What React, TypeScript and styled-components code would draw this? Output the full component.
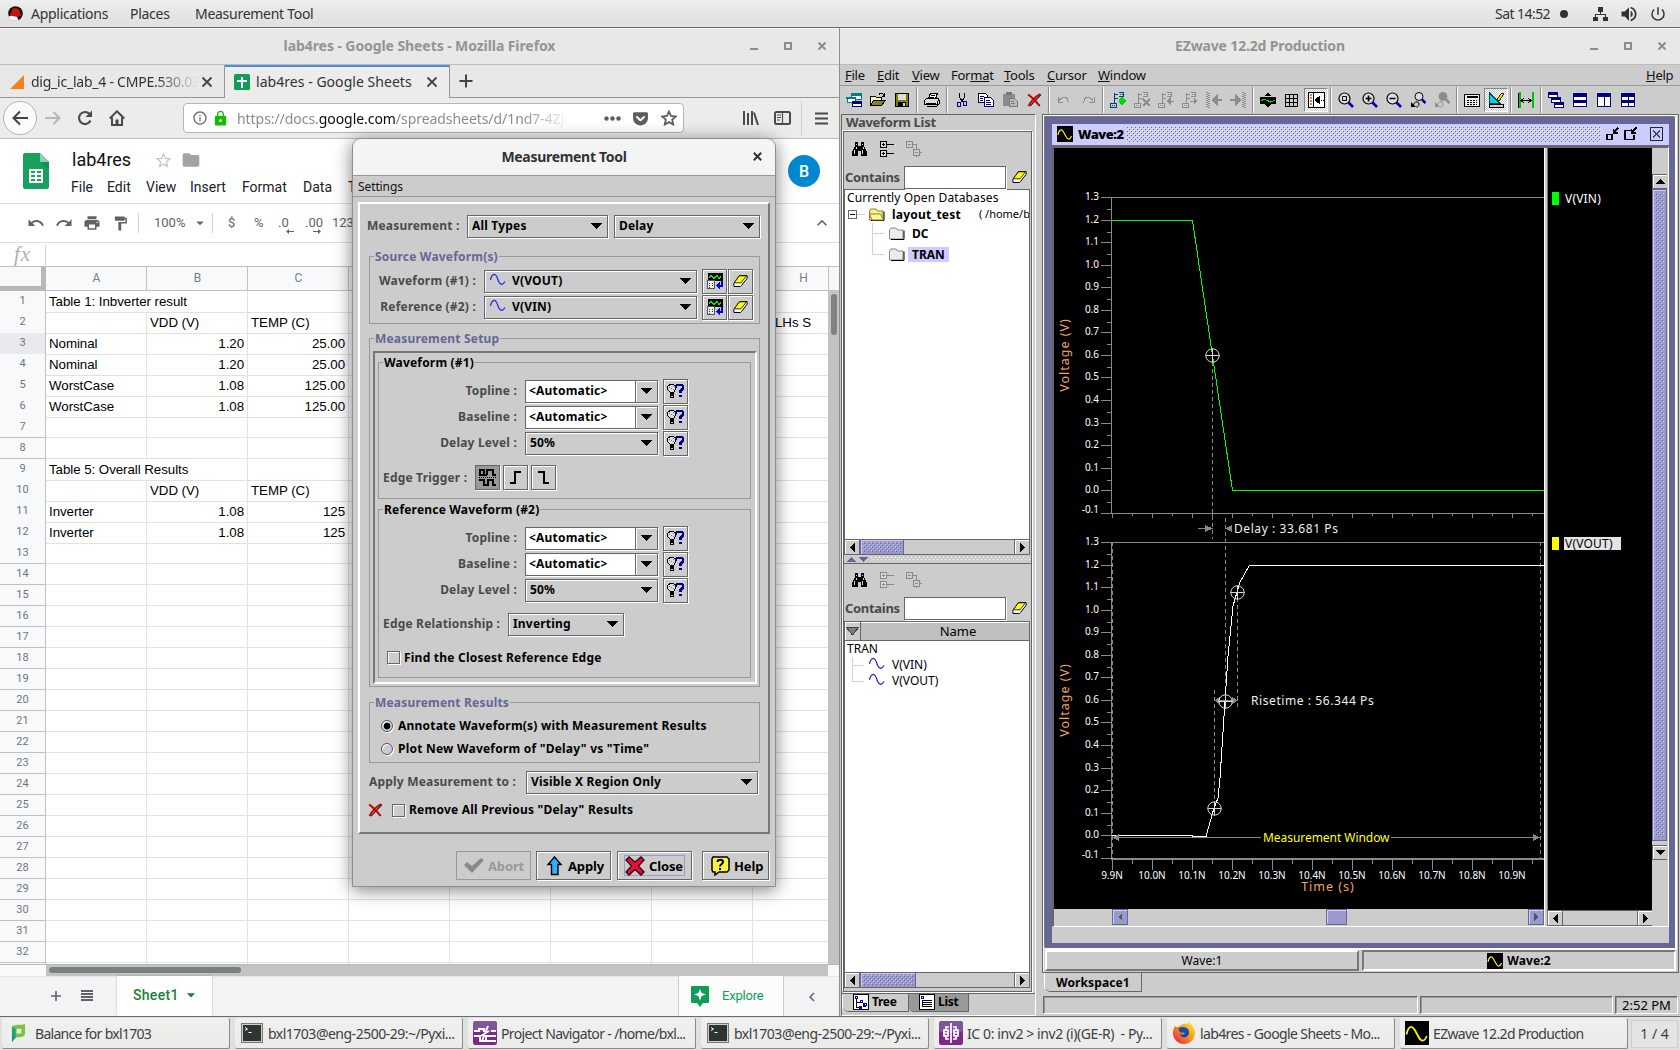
import React from "react";
import styled, { createGlobalStyle, css } from "styled-components";
import {
  MdUndo, MdRedo, MdPrint, MdFormatPaint, MdFolder, MdStarBorder, MdVolumeUp,
  MdPowerSettingsNew, MdLock, MdKeyboardArrowUp, MdKeyboardArrowLeft, MdArrowDropDown,
  MdInfoOutline,
} from "react-icons/md";
import { FaGetPocket } from "react-icons/fa";

const UI = `"Noto Sans", "Open Sans", sans-serif`;
const ROBOTO = `Roboto, "Noto Sans", sans-serif`;
const SHEET = `"Liberation Sans", Arial, sans-serif`;

const Global = createGlobalStyle`
  *, *::before, *::after { box-sizing: border-box; }
  html, body { margin: 0; padding: 0; background: #2f6f8f; overflow: hidden; }
  body { font-family: ${UI}; white-space: nowrap; cursor: default; }
  svg { display: block; flex: none; }
`;

/* ---------- shared looks ---------- */

const javaBold = css`
  font: 700 12px/16px ${UI};
  letter-spacing: 0.19px;
`;
const javaPlain = css`
  font: 400 12px/16px ${UI};
  letter-spacing: 0;
`;
const metalEdge = css`
  border: 1px solid #666;
  box-shadow: inset 1px 1px 0 #fff, 1px 1px 0 #fff;
`;
const bumps = (light: string, dark: string) => css`
  background-image:
    conic-gradient(from 270deg at 1px 1px, ${light} 90deg, transparent 0),
    conic-gradient(from 270deg at 1px 1px, ${dark} 90deg, transparent 0),
    conic-gradient(from 270deg at 1px 1px, ${light} 90deg, transparent 0),
    conic-gradient(from 270deg at 1px 1px, ${dark} 90deg, transparent 0);
  background-size: 4px 4px;
  background-position: 0 0, 1px 1px, 2px 2px, 3px 3px;
`;

/* ---------- desktop ---------- */

const Desktop = styled.div`
  position: relative;
  width: 1680px;
  height: 1050px;
  overflow: hidden;
  display: flex;
  flex-direction: column;
`;
const TopBar = styled.header`
  height: 28px;
  flex: none;
  display: flex;
  align-items: center;
  padding-left: 8px;
  background: linear-gradient(#ededed, #dfdfdf);
  border-bottom: 1px solid #6a6a6a;
  color: #2e3436;
  font-size: 14px;
  letter-spacing: -0.28px;
`;
const TopItem = styled.span<{ $w: number }>`
  width: ${(p) => p.$w}px;
  &:first-of-type { margin-left: 8px; }
`;
const TopRight = styled.div`
  margin-left: auto;
  display: flex;
  align-items: center;
  padding-right: 13px;
`;
const Clock = styled.span`
  width: 65px;
  letter-spacing: -0.55px;
`;
const Dot = styled.span`
  width: 8px;
  height: 8px;
  border-radius: 50%;
  background: #2e3436;
  margin-right: 24px;
`;
const TrayIcon = styled.span<{ $mr?: number }>`
  margin-right: ${(p) => p.$mr || 0}px;
`;
const Workarea = styled.main`
  display: flex;
  height: 988px;
  flex: none;
`;

/* ---------- window frame ---------- */

const Titlebar = styled.div`
  height: 37px;
  flex: none;
  display: flex;
  align-items: center;
  position: relative;
  background: #e8e8e7;
  border-top: 1px solid #f8f8f8;
  border-bottom: 1px solid #bdbdb8;
`;
const WindowTitle = styled.div<{ $ls?: number }>`
  flex: 1;
  text-align: center;
  padding-bottom: 2px;
  font: 700 14px/20px ${UI};
  letter-spacing: ${(p) => p.$ls ?? -0.08}px;
  color: #929595;
`;
const Controls = styled.div<{ $right: number }>`
  position: absolute;
  right: ${(p) => p.$right}px;
  top: 13px;
  display: flex;
  gap: 26px;
  color: #8b8e8f;
`;

const WinControls = ({ right = 13 }: { right?: number }) => (
  <Controls $right={right}>
    <svg width="8" height="8" viewBox="0 0 8 8"><path d="M0 7h8" stroke="currentColor" strokeWidth="2" /></svg>
    <svg width="8" height="8" viewBox="0 0 8 8"><path d="M1 1h6v6H1z" fill="none" stroke="currentColor" strokeWidth="2" /></svg>
    <svg width="8" height="8" viewBox="0 0 8 8"><path d="M.5.5l7 7M7.500.5l-7 7" stroke="currentColor" strokeWidth="2" /></svg>
  </Controls>
);

/* ---------- firefox ---------- */

const Firefox = styled.section`
  width: 840px;
  flex: none;
  display: flex;
  flex-direction: column;
  background: #ececeb;
  border-right: 1px solid #8f8f8f;
`;
const TabStrip = styled.div`
  height: 33px;
  flex: none;
  display: flex;
  background: #e8e8e7;
  box-shadow: inset 0 -1px 0 #979797;
`;
const Tab = styled.div<{ $active?: boolean }>`
  display: flex;
  align-items: center;
  width: ${(p) => (p.$active ? 226 : 224)}px;
  padding-left: ${(p) => (p.$active ? 9 : 10)}px;
  font-size: 14px;
  letter-spacing: ${(p) => (p.$active ? 0.04 : -0.24)}px;
  color: #2e3436;
  ${(p) =>
    p.$active &&
    css`
      background: #ececeb;
      border: 1px solid #979797;
      border-width: 0 1px;
      box-shadow: inset 0 2px 0 #4a90d9;
    `}
`;
const TabText = styled.span<{ $fade?: boolean }>`
  width: 169px;
  margin-left: ${(p) => (p.$fade ? 7 : 6)}px;
  overflow: hidden;
  ${(p) =>
    p.$fade &&
    css`
      mask-image: linear-gradient(90deg, #000 125px, transparent 167px);
    `}
`;
const CloseX = () => (
  <svg width="14" height="14" viewBox="0 0 14 14"><path d="M2.500 2.500l9 9M11.500 2.500l-9 9" stroke="#3f4446" strokeWidth="1.800" /></svg>
);
const PlusIcon = styled.svg`
  margin: 8px 0 0 8px;
`;
const NavBar = styled.div`
  height: 41px;
  flex: none;
  display: flex;
  align-items: center;
  padding-left: 3px;
  border-bottom: 1px solid #bcbcbc;
  color: #474b4d;
`;
const BackButton = styled.span`
  width: 34px;
  height: 34px;
  border-radius: 50%;
  border: 1px solid #b3b3b0;
  background: #fbfbfb;
  display: grid;
  place-items: center;
`;
const NavIcon = styled.span<{ $ml: number }>`
  margin-left: ${(p) => p.$ml}px;
`;
const UrlBar = styled.div`
  margin-left: 58px;
  width: 501px;
  height: 30px;
  border: 1px solid #b6b6b3;
  border-radius: 4px;
  background: #fff;
  display: flex;
  align-items: center;
  gap: 4px;
  padding-left: 8px;
  color: #555;
`;
const Url = styled.span`
  margin-left: 4px;
  width: 339px;
  overflow: hidden;
  font-size: 14px;
  letter-spacing: -0.06px;
  color: #8b8d8e;
  mask-image: linear-gradient(90deg, #000 285px, transparent 333px);
  b { font-weight: 400; color: #0c0c0d; }
`;
const NavDivider = styled.span`
  width: 1px;
  height: 34px;
  background: #cfcfcd;
  margin: 0 13px 0 10px;
`;

/* ---------- google sheets ---------- */

const DocHeader = styled.div`
  height: 65px;
  flex: none;
  display: flex;
  background: #fff;
  border-bottom: 1px solid #dcdedf;
  padding: 14px 0 0 23px;
`;
const DocInfo = styled.div`
  margin-left: 22px;
  width: 706px;
`;
const DocTitleRow = styled.div`
  display: flex;
  align-items: center;
  gap: 8px;
  height: 20px;
  margin-top: -3px;
  color: #a0a3a7;
`;
const DocTitle = styled.span`
  width: 75px;
  padding-left: 1px;
  font: 400 18px/22px ${ROBOTO};
  color: #111;
`;
const DocMenu = styled.nav`
  display: flex;
  margin-top: 7px;
  font: 400 14px/20px ${ROBOTO};
  color: #202124;
`;
const MenuWord = styled.span<{ $w: number }>`
  width: ${(p) => p.$w}px;
`;
const Avatar = styled.span`
  width: 32px;
  height: 32px;
  margin-top: 2px;
  margin-left: 11px;
  border-radius: 50%;
  background: #0288d1;
  color: #fff;
  font: 500 16px/33px ${ROBOTO};
  text-align: center;
`;
const SheetToolbar = styled.div`
  height: 39px;
  flex: none;
  display: flex;
  align-items: center;
  padding-left: 27px;
  background: #fff;
  border-bottom: 1px solid #dcdedf;
  color: #5f6368;
  font: 400 13px/18px ${ROBOTO};
`;
const ToolSlot = styled.span<{ $w: number }>`
  width: ${(p) => p.$w}px;
`;
const ThinRule = styled.span<{ $mr: number }>`
  width: 1px;
  height: 20px;
  background: #d0d2d4;
  margin-right: ${(p) => p.$mr}px;
`;
const Collapse = styled.span`
  margin-left: auto;
  margin-right: 7px;
`;
const Decimals = styled.span`
  position: relative;
  width: 27px;
  svg { position: absolute; left: 8px; top: 15px; }
`;
const FormulaBar = styled.div`
  height: 24px;
  flex: none;
  display: flex;
  align-items: center;
  background: #fff;
  border-bottom: 1px solid #c0c0c0;
  i {
    width: 45px;
    padding: 0 0 2px 14px;
    font: italic 21px/20px "Liberation Serif", serif;
    letter-spacing: 1px;
    color: #b0b0b0;
  }
`;
const GridArea = styled.div`
  display: flex;
  height: 697px;
  flex: none;
  background: #fff;
`;
const Grid = styled.div`
  width: 828px;
  overflow: hidden;
  display: flex;
  flex-direction: column;
`;
const GridRow = styled.div<{ $head?: boolean }>`
  display: grid;
  flex: none;
  grid-template-columns: 46px repeat(7, 101px) 101px;
  height: ${(p) => (p.$head ? 24 : 21)}px;
`;
const Corner = styled.div`
  background: #f8f9fa;
  border: solid #b9b9b9;
  border-width: 0 5px 5px 0;
`;
const ColHead = styled.div`
  background: #f8f9fa;
  border: solid #c0c0c0;
  border-width: 0 1px 1px 0;
  text-align: center;
  padding-left: 1px;
  font: 400 12px/22px ${ROBOTO};
  color: #777b80;
`;
const RowHead = styled.div<{ $on?: boolean }>`
  background: ${(p) => (p.$on ? "#e8eaed" : "#f8f9fa")};
  border: solid #c0c0c0;
  border-width: 0 1px 1px 0;
  text-align: center;
  font: 400 11px/20px ${ROBOTO};
  color: #70757a;
`;
const Cell = styled.div<{ $right?: boolean; $over?: boolean; $pl?: number }>`
  border: solid #e1e1e1;
  border-width: 0 1px 1px 0;
  border-right-color: ${(p) => (p.$over ? "transparent" : "#e1e1e1")};
  padding: 1px 3px 0 ${(p) => p.$pl || 3}px;
  font: 400 13.330px/20px ${SHEET};
  letter-spacing: -0.06px;
  color: #000;
  text-align: ${(p) => (p.$right ? "right" : "left")};
`;
const VScroll = styled.div`
  flex: 1;
  background: linear-gradient(#f6f7f8 23px, #c0c0c0 23px, #c0c0c0 24px, #c1c4c3 24px);
  padding: 27px 0 0 2px;
  border-left: 1px solid #c0c0c0;
  &::before {
    content: "";
    display: block;
    width: 6px;
    height: 41px;
    border-radius: 3px;
    background: #7d8282;
  }
`;
const HScroll = styled.div`
  height: 12px;
  flex: none;
  display: flex;
  background: #f8f9fa;
  border-top: 1px solid #b5b8b7;
`;
const HTrack = styled.div`
  margin-left: 46px;
  width: 782px;
  background: #c1c4c3;
  padding: 2px 3px;
  &::before {
    content: "";
    display: block;
    width: 192px;
    height: 6px;
    border-radius: 3px;
    background: #7a7f7f;
  }
`;
const SheetTabs = styled.div`
  height: 40px;
  flex: none;
  display: flex;
  align-items: center;
  background: #f1f3f4;
  border-top: 1px solid #e3e6e7;
  padding: 0 0 2px 51px;
`;
const ListGlyph = styled.svg`
  margin-left: 20px;
`;
const SheetTab = styled.div`
  width: 95px;
  height: 40px;
  margin: 1px 0 0 24px;
  display: flex;
  align-items: center;
  padding: 0 0 2px 16px;
  background: #fff;
  box-shadow: 0 0 2px rgba(0, 0, 0, 0.25);
  color: #188038;
  font: 500 14px/20px ${ROBOTO};
  letter-spacing: 0.3px;
  span { width: 48px; }
`;
const Explore = styled.div`
  width: 106px;
  height: 40px;
  margin: 1px 0 0 466px;
  display: flex;
  align-items: center;
  gap: 13px;
  padding: 0 0 0 12px;
  background: #fcfcfc;
  border: solid #c9cbcd;
  border-width: 0 1px;
  color: #0f9d58;
  font: 400 13px/20px ${ROBOTO};
  letter-spacing: -0.2px;
`;
const FoldArrow = styled.span`
  margin: 3px 0 0 19px;
  color: #5f6368;
`;

type Val = string | undefined;
const ROWS: Record<number, Val[]> = {
  1: ["Table 1: Inbverter result"],
  2: ["", "VDD (V)", "TEMP (C)", "", "", "", "", "LHs S"],
  3: ["Nominal", "1.20", "25.00"],
  4: ["Nominal", "1.20", "25.00"],
  5: ["WorstCase", "1.08", "125.00"],
  6: ["WorstCase", "1.08", "125.00"],
  9: ["Table 5: Overall Results"],
  10: ["", "VDD (V)", "TEMP (C)"],
  11: ["Inverter", "1.08", "125"],
  12: ["Inverter", "1.08", "125"],
};
const COLS = ["A", "B", "C", "D", "E", "F", "G", "H"];

const FirefoxWindow = () => (
  <Firefox>
    <Titlebar><WindowTitle>lab4res - Google Sheets - Mozilla Firefox</WindowTitle><WinControls /></Titlebar>
    <TabStrip>
      <Tab>
        <svg width="14" height="14" viewBox="0 0 14 14"><path d="M14 0v14H0z" fill="#f5821f" /></svg>
        <TabText $fade>dig_ic_lab_4 - CMPE.530.03</TabText>
        <CloseX />
      </Tab>
      <Tab $active>
        <svg width="16" height="16" viewBox="0 0 16 16"><rect width="16" height="16" rx="1.500" fill="#0f9d58" /><path d="M7 3h2v3h4v2H9v6H7V8H3V6h4z" fill="#fff" /></svg>
        <TabText>lab4res - Google Sheets</TabText>
        <CloseX />
      </Tab>
      <PlusIcon width="16" height="16" viewBox="0 0 16 16"><path d="M8 1.500v13M1.500 8h13" stroke="#3f4446" strokeWidth="2" /></PlusIcon>
    </TabStrip>
    <NavBar>
      <BackButton>
        <svg width="18" height="16" viewBox="0 0 18 16"><path d="M17 8H3M9 1.500L2.500 8 9 14.500" fill="none" stroke="#3f4446" strokeWidth="2" /></svg>
      </BackButton>
      <NavIcon $ml={8}><svg width="16" height="14" viewBox="0 0 16 14"><path d="M0 7h14M8.500 1l6 6-6 6" fill="none" stroke="#b7b8b8" strokeWidth="2" /></svg></NavIcon>
      <NavIcon $ml={16}><svg width="16" height="16" viewBox="0 0 16 16"><path d="M13.500 10.500A6 6 0 1 1 12.500 4" fill="none" stroke="#474b4d" strokeWidth="2.200" /><path d="M15 .5V7H8.500z" fill="#474b4d" /></svg></NavIcon>
      <NavIcon $ml={16}><svg width="16" height="16" viewBox="0 0 16 16"><path d="M.8 8.500L8 1.300l7.200 7.200M3 7.500V15h10V7.500" fill="none" stroke="#474b4d" strokeWidth="2" /><path d="M6.500 9.500h3V15h-3z" fill="#474b4d" /></svg></NavIcon>
      <UrlBar>
        <MdInfoOutline size={16} color="#6a6d6f" />
        <MdLock size={17} color="#12bc00" />
        <Url>https://docs.<b>google.com</b>/spreadsheets/d/1nd7-4ZJn</Url>
        <NavIcon $ml={24}><svg width="17" height="5" viewBox="0 0 17 5"><circle cx="2.500" cy="2.500" r="2.200" fill="#5a5e60" /><circle cx="8.500" cy="2.500" r="2.200" fill="#5a5e60" /><circle cx="14.500" cy="2.500" r="2.200" fill="#5a5e60" /></svg></NavIcon>
        <NavIcon $ml={7}><FaGetPocket size={17} color="#5a5e60" /></NavIcon>
        <NavIcon $ml={8}><svg width="16" height="16" viewBox="0 0 16 16"><path d="M8 1.500l2 4.500 4.800.5-3.600 3.200 1 4.800L8 12.100l-4.200 2.400 1-4.800L1.200 6.500 6 6z" fill="none" stroke="#5a5e60" strokeWidth="1.800" /></svg></NavIcon>
      </UrlBar>
      <NavIcon $ml={59}><svg width="16" height="14" viewBox="0 0 16 14"><path d="M1 0v14M5 2v12M9 0v14M11 1.500L15 14" stroke="#474b4d" strokeWidth="2" /></svg></NavIcon>
      <NavIcon $ml={15}><svg width="17" height="14" viewBox="0 0 17 14"><rect x="1" y="1" width="15" height="12" rx="1.500" fill="none" stroke="#474b4d" strokeWidth="2" /><path d="M8.500 1v12M3 4h4M3 6.500h4M3 9h3" stroke="#474b4d" strokeWidth="1.200" /></svg></NavIcon>
      <NavDivider />
      <svg width="13" height="13" viewBox="0 0 13 13"><path d="M0 1.500h13M0 6.500h13M0 11.500h13" stroke="#474b4d" strokeWidth="2" /></svg>
    </NavBar>
    <DocHeader>
      <svg width="26" height="36" viewBox="0 0 26 36">
        <path d="M2 0h15l9 9v25a2 2 0 0 1-2 2H2a2 2 0 0 1-2-2V2a2 2 0 0 1 2-2z" fill="#18a05e" />
        <path d="M17 0l9 9h-9z" fill="#8ed1b1" /><path d="M17 9l9 8V9z" fill="#128047" opacity=".5" />
        <path d="M6 16h14v14H6zM8 18v2h4v-2zm6 0v2h4v-2zM8 22v2h4v-2zm6 0v2h4v-2zM8 26v2h4v-2zm6 0v2h4v-2z" fill="#fff" fillRule="evenodd" />
      </svg>
      <DocInfo>
        <DocTitleRow>
          <DocTitle>lab4res</DocTitle>
          <MdStarBorder size={19} color="#c4c7ca" />
          <MdFolder size={20} />
        </DocTitleRow>
        <DocMenu>
          {([["File", 36], ["Edit", 39], ["View", 44], ["Insert", 52], ["Format", 61], ["Data", 45], ["Tools", 40]] as [string, number][]).map(([t, w]) => (
            <MenuWord key={t} $w={w}>{t}</MenuWord>
          ))}
        </DocMenu>
      </DocInfo>
      <Avatar>B</Avatar>
    </DocHeader>
    <SheetToolbar>
      <ToolSlot $w={28}><MdUndo size={18} /></ToolSlot>
      <ToolSlot $w={28}><MdRedo size={18} /></ToolSlot>
      <ToolSlot $w={29}><MdPrint size={18} /></ToolSlot>
      <ToolSlot $w={26}><MdFormatPaint size={17} /></ToolSlot>
      <ThinRule $mr={15} />
      <ToolSlot $w={37}>100%</ToolSlot>
      <ToolSlot $w={21}><MdArrowDropDown size={18} /></ToolSlot>
      <ThinRule $mr={15} />
      <ToolSlot $w={26}>$</ToolSlot>
      <ToolSlot $w={24}>%</ToolSlot>
      <Decimals>.0<svg width="8" height="5" viewBox="0 0 8 5"><path d="M3 0v5L0 2.500zM3 2h5v1H3z" fill="#5f6368" /></svg></Decimals>
      <Decimals>.00<svg width="8" height="5" viewBox="0 0 8 5"><path d="M5 0v5l3-2.500zM0 2h5v1H0z" fill="#5f6368" /></svg></Decimals>
      <span>123</span>
      <Collapse><MdKeyboardArrowUp size={20} /></Collapse>
    </SheetToolbar>
    <FormulaBar><i>fx</i><ThinRule $mr={0} /></FormulaBar>
    <GridArea>
      <Grid>
        <GridRow $head>
          <Corner />
          {COLS.map((c) => <ColHead key={c}>{c}</ColHead>)}
        </GridRow>
        {Array.from({ length: 33 }, (_, i) => i + 1).map((n) => (
          <GridRow key={n}>
            <RowHead $on={n === 3}>{n < 33 ? n : ""}</RowHead>
            {COLS.map((c, i) => {
              const v = ROWS[n]?.[i];
              return (
                <Cell key={c} $right={!!v && /^[\d.]+$/.test(v)} $over={!!v && v.startsWith("Table")} $pl={i === 7 ? 22 : 3}>{v}</Cell>
              );
            })}
          </GridRow>
        ))}
      </Grid>
      <VScroll />
    </GridArea>
    <HScroll><HTrack /></HScroll>
    <SheetTabs>
      <svg width="10" height="10" viewBox="0 0 10 10"><path d="M5 0v10M0 5h10" stroke="#5f6368" strokeWidth="1.600" /></svg>
      <ListGlyph width="12" height="11" viewBox="0 0 12 11"><path d="M0 1h12M0 4h12M0 7h12M0 10h12" stroke="#5f6368" strokeWidth="1.800" /></ListGlyph>
      <SheetTab><span>Sheet1</span><MdArrowDropDown size={20} /></SheetTab>
      <Explore>
        <svg width="18" height="21" viewBox="0 0 18 21"><path d="M1 0h16a1 1 0 0 1 1 1v15a1 1 0 0 1-1 1h-5l-3 4-3-4H1a1 1 0 0 1-1-1V1a1 1 0 0 1 1-1z" fill="#0f9d58" /><path d="M9 3l1.600 4L15 8.600 10.600 10 9 14.500 7.400 10 3 8.600 7.400 7z" fill="#fff" /></svg>
        Explore
      </Explore>
      <FoldArrow><MdKeyboardArrowLeft size={18} /></FoldArrow>
    </SheetTabs>
  </Firefox>
);

/* ---------- small pixel icons ---------- */

const Px = ({ w = 16, h = 16, children }: { w?: number; h?: number; children: React.ReactNode }) => (
  <svg width={w} height={h} viewBox={`0 0 ${w} ${h}`} shapeRendering="crispEdges" fill="none">{children}</svg>
);
const SineIcon = ({ box, size = 16 }: { box?: boolean; size?: number }) => (
  <svg width={size} height={size} viewBox="0 0 16 16" fill="none">
    {box && <rect width="16" height="16" fill="#000" />}
    <path d={box ? "M1 9C2 3.500 4.500 2.500 6.500 6L9 10.500c1.800 3.500 4 3.500 5.500-.5" : "M.5 7C1.500 1 5.500-1 7.500 5.500s5 7.500 7.500 3"} stroke={box ? "#f5ee1c" : "#2424f0"} strokeWidth="1.200" />
  </svg>
);
const EraserIcon = () => (
  <svg width="15" height="12" viewBox="0 0 15 12"><path d="M6.500.5h7.500l.3 2.500-5.800 7.500-1 1H1l-.2-3z" fill="#fff" stroke="#000" /><path d="M6.500.8h7L8 7.800H1.200z" fill="#ffff00" stroke="#000" strokeWidth=".8" /></svg>
);
const CalcWaveIcon = () => (
  <Px>
    <path d="M1 0h15v8H1z" fill="#000" /><path d="M2 5l2-3 3 4 3-4 2 4 2-3" stroke="#00f000" strokeWidth="1.200" />
    <path d="M0 7h8v9H0z" fill="#555" /><path d="M1 8h6v7H1z" fill="#eee" /><path d="M2 10h1v1H2zM5 10h1v1H5zM2 12h1v1H2zM5 12h1v1H5zM2 14h1v1H2z" fill="#333" />
    <path d="M14 8h2v6h-3v2l-4-3.500L13 9v3h1z" fill="#0000e0" />
  </Px>
);
const BulbIcon = () => (
  <svg width="17" height="15" viewBox="0 0 17 15" shapeRendering="crispEdges">
    <path d="M3 .5h3.500l2 2v3l-2 3h-3l-3-3v-3z" fill="#ddd" stroke="#000" /><path d="M3.500 9h3v1.500h-3zM3.500 11.500h3V13h-3z" fill="#ccc" stroke="#000" />
    <path d="M4 4h1v1H4zM6 2h1v1H6zM6 5h1v1H6zM2 3h1v1H2z" fill="#777" />
    <path d="M9 4V2l2-1.500h3.500L16 2v2.500L13.500 7v2" fill="none" stroke="#000080" strokeWidth="2.200" /><path d="M12.300 10.500h2.400v2.300h-2.400z" fill="#000080" />
  </svg>
);
const RedX = () => (
  <svg width="15" height="14" viewBox="0 0 15 14"><path d="M2 2l11 11M14 1.500L3 13" stroke="#222" strokeWidth="1.200" /><path d="M1 1.500C5 4 9 8 12 12.500M13 1C8 4 4 8 1.500 13" fill="none" stroke="#d40000" strokeWidth="2" /></svg>
);
const BinocularIcon = () => (
  <Px w={15} h={14}><path d="M3 0h3v4h3V0h3v4l1 2 2 4v4H9V9H6v5H0v-4l2-4 1-2z" fill="#000" /><path d="M4 2h1v1H4zM10 2h1v1h-1zM2 8h1v4H2zM10 8h1v4h-1zM4 5h1v2H4zM11 5h1v2h-1z" fill="#ddd" /></Px>
);
const ExpandIcon = ({ c = "#000" }: { c?: string }) => (
  <Px w={15} h={16}><path d="M1 .5h6v6H1zM1 9.500h6v6H1z" fill="#ddd" stroke={c} /><path d="M2.500 3.500h3M4 2v3M2.500 12.500h3M4 11v3M7 3.500h8M7 12.500h8" stroke={c} /></Px>
);
const CollapseIcon = () => (
  <Px w={16} h={16}><path d="M.5.5h6v6h-6zM7.500 8.500h6v6h-6zM2 3.500h3M9 11.500h3M7 3.500h3.500v5M14 11.500h2M10.500 15v1" stroke="#888" /></Px>
);
const FolderIcon = ({ open }: { open?: boolean }) => (
  <svg width="16" height="13" viewBox="0 0 16 13">
    <path d="M.5 12V3L2 1h5l1.500 2H14v9z" fill={open ? "#f6ec8a" : "#ececec"} stroke={open ? "#8f8420" : "#888"} />
    <path d="M15 3.500v9H2" stroke="#000" fill="none" />
    {open && <path d="M.5 6h11l3 6H3z" fill="#fff59c" stroke="#8f8420" />}
  </svg>
);

/* ---------- measurement dialog ---------- */

const Dialog = styled.section`
  position: absolute;
  left: 352px;
  top: 138px;
  width: 424px;
  height: 749px;
  border: 1px solid #8e8e8e;
  border-radius: 9px 9px 0 0;
  background: #ccc;
  box-shadow: 0 3px 18px rgba(0, 0, 0, 0.5);
  display: flex;
  flex-direction: column;
`;
const DialogTitle = styled.div`
  position: relative;
  height: 37px;
  flex: none;
  border-radius: 8px 8px 0 0;
  background: #f4f4f4;
  border-bottom: 1px solid #999;
  text-align: center;
  font: 700 14px/35px ${UI};
  letter-spacing: -0.3px;
  color: #2e3436;
  svg { position: absolute; right: 13px; top: 13px; }
`;
const DialogMenu = styled.div`
  height: 21px;
  flex: none;
  padding: 3px 0 0 5px;
  border-bottom: 1px solid #999;
  ${javaPlain}
  letter-spacing: -0.1px;
  color: #111;
`;
const RaisedPanel = styled.div`
  margin: 5px 0 0 5px;
  width: 412px;
  height: 632px;
  border: 2px solid #fff;
  border-right-color: #777;
  border-bottom-color: #777;
`;
const FormRow = styled.div<{ $mt: number; $ml: number; $h?: number }>`
  display: flex;
  align-items: center;
  height: ${(p) => p.$h || 24}px;
  margin: ${(p) => p.$mt}px 0 0 ${(p) => p.$ml}px;
`;
const Label = styled.label<{ $w: number; $right?: boolean }>`
  width: ${(p) => p.$w}px;
  text-align: ${(p) => (p.$right ? "right" : "left")};
  ${javaBold}
  color: #4a4a4a;
`;
const ComboBox = styled.div<{ $w: number; $ml?: number }>`
  width: ${(p) => p.$w}px;
  height: 23px;
  margin-left: ${(p) => p.$ml || 0}px;
  ${metalEdge}
  display: flex;
  align-items: center;
  padding: 0 5px 1px 4px;
  gap: 6px;
  ${javaBold}
  color: #000;
  > svg:last-child { margin-left: auto; }
  > svg:first-child:not(:last-child) { margin-left: 1px; }
`;
const EditCombo = styled(ComboBox)`
  background: #fff;
  box-shadow: 1px 1px 0 #fff;
  padding: 0 0 0 3px;
`;
const ArrowBox = styled.span`
  width: 22px;
  height: 21px;
  margin-left: auto;
  background: #ccc;
  border-left: 1px solid #666;
  box-shadow: inset 1px 1px 0 #fff;
  display: grid;
  place-items: center;
`;
const IconButton = styled.button<{ $ml?: number; $on?: boolean }>`
  width: 25px;
  height: 25px;
  padding: 0;
  margin-left: ${(p) => p.$ml || 0}px;
  background: ${(p) => (p.$on ? "#999" : "#ccc")};
  ${metalEdge}
  ${(p) => p.$on && css`box-shadow: 1px 1px 0 #fff;`}
  display: grid;
  place-items: center;
`;
const Group = styled.div<{ $w: number; $h: number; $mt: number; $ml: number }>`
  width: ${(p) => p.$w}px;
  height: ${(p) => p.$h}px;
  margin: ${(p) => p.$mt}px 0 0 ${(p) => p.$ml}px;
  border: 1px solid #999;
  display: flex;
  flex-direction: column;
  align-items: flex-start;
`;
const Legend = styled.span<{ $dark?: boolean }>`
  margin: -9px 0 0 4px;
  padding: 0 1px;
  height: 16px;
  background: #ccc;
  ${javaBold}
  line-height: 18px;
  color: ${(p) => (p.$dark ? "#000" : "#666699")};
`;
const SunkenPanel = styled.div`
  margin: 5px 0 0 3px;
  width: 384px;
  height: 333px;
  border: 2px solid #777;
  border-right-color: #fff;
  border-bottom-color: #fff;
  display: flex;
  flex-direction: column;
`;
const Check = styled.span`
  width: 13px;
  height: 13px;
  flex: none;
  ${metalEdge}
`;
const Radio = styled.span<{ $on?: boolean }>`
  width: 12px;
  height: 12px;
  flex: none;
  border-radius: 50%;
  border: 1px solid #555;
  box-shadow: 1px 1px 0 #fff, inset 1px 1px 0 #fff;
  background: ${(p) => (p.$on ? "radial-gradient(#000 3px, #ccc 3.700px)" : "#ccc")};
`;
const Caption = styled.span<{ $ml?: number }>`
  margin-left: ${(p) => p.$ml || 4}px;
  ${javaBold}
  letter-spacing: 0.22px;
  color: #000;
`;
const ClearMark = styled.span`
  margin-right: 9px;
`;
const ButtonRow = styled.div`
  display: flex;
  margin: 17px 0 0 103px;
`;
const DialogButton = styled.button<{ $w: number; $ml?: number; $off?: boolean; $focus?: boolean }>`
  width: ${(p) => p.$w}px;
  height: 29px;
  padding: 0 0 0 7px;
  margin-left: ${(p) => p.$ml || 0}px;
  background: #ccc;
  ${metalEdge}
  ${(p) => p.$off && css`border-color: #999; box-shadow: none;`}
  ${(p) => p.$focus && css`background: linear-gradient(#9999cc, #9999cc) 6px 3px / 61px 1px no-repeat, linear-gradient(#9999cc, #9999cc) 6px 23px / 61px 1px no-repeat, linear-gradient(#9999cc, #9999cc) 6px 3px / 1px 21px no-repeat, linear-gradient(#9999cc, #9999cc) 66px 3px / 1px 21px no-repeat, #ccc;`}
  display: flex;
  align-items: center;
  gap: 4px;
  ${javaBold}
  font-size: 13px;
  letter-spacing: -0.15px;
  color: ${(p) => (p.$off ? "#999" : "#000")};
`;

const Arrow = () => <Px w={11} h={6}><path d="M0 0h11v1H0zM1 1h9v1H1zM2 2h7v1H2zM3 3h5v1H3zM4 4h3v1H4zM5 5h1v1H5z" fill="#000" /></Px>;

const LevelRows = () => (
  <>
    {["Topline :", "Baseline :"].map((t, i) => (
      <FormRow key={t} $mt={i ? 0 : 8} $ml={0} $h={26}>
        <Label $w={138} $right>{t}</Label>
        <EditCombo $w={133} $ml={8}>&lt;Automatic&gt;<ArrowBox><Arrow /></ArrowBox></EditCombo>
        <IconButton $ml={5}><BulbIcon /></IconButton>
      </FormRow>
    ))}
    <FormRow $mt={0} $ml={0} $h={26}>
      <Label $w={138} $right>Delay Level :</Label>
      <ComboBox $w={133} $ml={8}>50%<Arrow /></ComboBox>
      <IconButton $ml={5}><BulbIcon /></IconButton>
    </FormRow>
  </>
);

const MeasurementTool = () => (
  <Dialog>
    <DialogTitle>Measurement Tool
      <svg width="9" height="9" viewBox="0 0 9 9"><path d="M.8.8l7.400 7.400M8.200.8L.8 8.200" stroke="#2e3436" strokeWidth="2" /></svg>
    </DialogTitle>
    <DialogMenu>Settings</DialogMenu>
    <RaisedPanel>
      <FormRow $mt={10} $ml={7}>
        <Label $w={100}>Measurement :</Label>
        <ComboBox $w={141}>All Types<Arrow /></ComboBox>
        <ComboBox $w={146} $ml={6}>Delay<Arrow /></ComboBox>
      </FormRow>
      <Group $w={391} $h={68} $mt={18} $ml={9}>
        <Legend>Source Waveform(s)</Legend>
        {[["Waveform (#1) :", "V(VOUT)"], ["Reference (#2) :", "V(VIN)"]].map(([l, v], i) => (
          <FormRow key={l} $mt={i ? 0 : 4} $ml={0} $h={26}>
            <Label $w={106} $right>{l}</Label>
            <ComboBox $w={213} $ml={8}><SineIcon />{v}<Arrow /></ComboBox>
            <IconButton $ml={5}><CalcWaveIcon /></IconButton>
            <IconButton $ml={1}><EraserIcon /></IconButton>
          </FormRow>
        ))}
      </Group>
      <Group $w={391} $h={349} $mt={14} $ml={9}>
        <Legend>Measurement Setup</Legend>
        <SunkenPanel>
          <Group $w={373} $h={137} $mt={9} $ml={3}>
            <Legend $dark>Waveform (#1)</Legend>
            <LevelRows />
            <FormRow $mt={9} $ml={4} $h={25}>
              <Label $w={92}>Edge Trigger :</Label>
              <IconButton $on><Px w={17} h={17}><path d="M0 1h5v5h3M8 6V1h6v5h3M1 1v5M0 6h5M0 11h5v5h4v-5h5v5h3" stroke="#000" strokeWidth="2" /><path d="M0 8.500h17" stroke="#000" strokeDasharray="1 1" /></Px></IconButton>
              <IconButton $ml={3}><Px w={13} h={15}><path d="M1 13h5V2h6" stroke="#000" strokeWidth="2" /></Px></IconButton>
              <IconButton $ml={3}><Px w={13} h={15}><path d="M1 2h6v11h5" stroke="#000" strokeWidth="2" /></Px></IconButton>
            </FormRow>
          </Group>
          <Group $w={373} $h={169} $mt={10} $ml={3}>
            <Legend $dark>Reference Waveform (#2)</Legend>
            <LevelRows />
            <FormRow $mt={9} $ml={4}>
              <Label $w={125}>Edge Relationship :</Label>
              <ComboBox $w={116}>Inverting<Arrow /></ComboBox>
            </FormRow>
            <FormRow $mt={15} $ml={8} $h={13}><Check /><Caption>Find the Closest Reference Edge</Caption></FormRow>
          </Group>
        </SunkenPanel>
      </Group>
      <Group $w={391} $h={61} $mt={15} $ml={9}>
        <Legend>Measurement Results</Legend>
        <FormRow $mt={7} $ml={11} $h={17}><Radio $on /><Caption $ml={5}>Annotate Waveform(s) with Measurement Results</Caption></FormRow>
        <FormRow $mt={6} $ml={11} $h={17}><Radio /><Caption $ml={5}>Plot New Waveform of "Delay" vs "Time"</Caption></FormRow>
      </Group>
      <FormRow $mt={7} $ml={9}>
        <Label $w={157}>Apply Measurement to :</Label>
        <ComboBox $w={232}>Visible X Region Only<Arrow /></ComboBox>
      </FormRow>
      <FormRow $mt={8} $ml={8} $h={16}>
        <ClearMark><RedX /></ClearMark>
        <Check />
        <Caption>Remove All Previous "Delay" Results</Caption>
      </FormRow>
    </RaisedPanel>
    <ButtonRow>
      <DialogButton $w={75} $off>
        <svg width="20" height="17" viewBox="0 0 20 17"><path d="M0 8l3-3 5 4 9-8 3 2L8 16z" fill="#8a8a8a" /></svg>Abort
      </DialogButton>
      <DialogButton $w={75} $ml={5}>
        <svg width="20" height="20" viewBox="0 0 20 20"><path d="M10.500 1L17 8.500h-3V18.500H7.500V8.500H4z" fill="#2fb0ff" stroke="#000" strokeWidth="1.400" /></svg>Apply
      </DialogButton>
      <DialogButton $w={75} $ml={6} $focus>
        <svg width="20" height="20" viewBox="0 0 20 20"><path d="M1 4l3-3 6 5 6-5 3 3-5.500 6L19 16l-3 3-6-5.500L4 19l-3-3 5.500-6z" fill="#e0103c" stroke="#300" strokeWidth="1.300" /></svg>Close
      </DialogButton>
      <DialogButton $w={67} $ml={10}>
        <svg width="20" height="20" viewBox="0 0 20 20"><path d="M3 1h14l2 2v11l-2 2H9l-4 3v-3H3l-1-2V3z" fill="#ffef4a" stroke="#000" strokeWidth="1.500" /><path d="M7.500 6c0-3 5.500-3 5.500 0 0 2-3 2-3 4.500M10 12v2" fill="none" stroke="#000" strokeWidth="2" /></svg>Help
      </DialogButton>
    </ButtonRow>
  </Dialog>
);

/* ---------- EZwave ---------- */

const EZ = styled.section`
  width: 840px;
  display: flex;
  flex-direction: column;
  background: #ccc;
`;
const EZMenu = styled.nav`
  height: 21px;
  flex: none;
  display: flex;
  align-items: center;
  padding: 0 7px 0 5px;
  border-bottom: 1px solid #999;
  font: 400 13px/18px ${UI};
  letter-spacing: -0.25px;
  color: #111;
  span:last-child { margin-left: auto; }
`;
const EZToolbar = styled.div`
  height: 28px;
  flex: none;
  display: flex;
  align-items: center;
  padding: 0 0 0 2px;
`;
const Tool = styled.span<{ $on?: boolean }>`
  width: 24px;
  height: 24px;
  display: grid;
  place-items: center;
  ${(p) =>
    p.$on &&
    css`
      border: 1px solid #888;
      border-right-color: #fff;
      border-bottom-color: #fff;
      background: repeating-conic-gradient(#fff 0 25%, #ccc 0 50%) 0 0 / 2px 2px;
    `}
`;
const ToolSep = styled.span`
  width: 2px;
  height: 26px;
  margin: 0 2px;
  background: linear-gradient(90deg, #888 1px, #fff 1px);
`;
const EZBody = styled.div`
  display: flex;
  height: 902px;
  flex: none;
`;
const Dock = styled.aside`
  width: 195px;
  height: 902px;
  margin-left: 1px;
  border: 1px solid #666;
  border-right-color: #fff;
  border-bottom-color: #fff;
  display: flex;
  flex-direction: column;
`;
const DockTitle = styled.div`
  height: 16px;
  padding-left: 4px;
  font: 700 13px/15px ${UI};
  letter-spacing: -0.3px;
  color: #4a4a4a;
`;
const DockFrame = styled.div`
  margin-left: 1px;
  width: 189px;
  height: 861px;
  border: 1px solid #666;
  box-shadow: 1px 1px 0 #fff, -1px -1px 0 #fff;
`;
const DockTools = styled.div<{ $h: number }>`
  height: ${(p) => p.$h}px;
  display: flex;
  align-items: center;
  padding: 0 0 0 8px;
  gap: 12px;
`;
const FilterRow = styled.div`
  height: 24px;
  display: flex;
  align-items: center;
  padding-left: 1px;
  label {
    width: 59px;
    font: 700 13px/16px ${UI};
    letter-spacing: -0.3px;
    color: #4a4a4a;
  }
  div {
    width: 102px;
    height: 23px;
    background: #fff;
    border: 1px solid #666;
    box-shadow: 1px 1px 0 #fff;
    margin-right: 6px;
  }
`;
const ListBox = styled.div<{ $h: number; $mt?: number }>`
  height: ${(p) => p.$h}px;
  margin-top: ${(p) => p.$mt || 0}px;
  width: 186px;
  border: 1px solid #666;
  border-width: 1px 1px 0 1px;
  background: #fff;
  display: flex;
  flex-direction: column;
`;
const TreeArea = styled.div`
  flex: 1;
  overflow: hidden;
  ${javaPlain}
  color: #000;
`;
const TreeLine = styled.div<{ $h: number; $pl: number; $ls?: number }>`
  display: flex;
  align-items: center;
  height: ${(p) => p.$h}px;
  padding-left: ${(p) => p.$pl}px;
  letter-spacing: ${(p) => p.$ls || 0}px;
  > svg { margin-right: 3px; }
  b { padding: 0 4px; line-height: 15px; }
  small { font-size: 11px; margin-left: 14px; }
`;
const RootName = styled.b`
  letter-spacing: 0.2px;
`;
const LeafName = styled.span`
  padding-left: 4px;
`;
const Twig = styled.span<{ $last?: boolean }>`
  width: 12px;
  flex: none;
  align-self: stretch;
  margin-right: 5px;
  background:
    linear-gradient(#ccf, #ccf) 0 50% / 12px 1px no-repeat,
    linear-gradient(#ccf, #ccf) 0 0 / 1px ${(p) => (p.$last ? "50%" : "100%")} no-repeat;
`;
const Knob = styled.span`
  width: 17px;
  height: 9px;
  flex: none;
  margin-right: 4px;
  display: flex;
  align-items: center;
  &::before {
    content: "";
    width: 9px;
    height: 9px;
    border: 1px solid #666;
    background: linear-gradient(#000, #000) 1px 3px / 5px 1px no-repeat #fff;
  }
  &::after {
    content: "";
    width: 8px;
    height: 1px;
    background: #ccf;
  }
`;
const Picked = styled.b`
  background: #ccccff;
`;
const SwingScroll = styled.div`
  height: 16px;
  flex: none;
  display: flex;
  border: 1px solid #666;
  border-width: 1px 0;
  background: #ccc;
`;
const ScrollEnd = styled.span<{ $right?: boolean }>`
  width: 15px;
  margin-left: ${(p) => (p.$right ? "auto" : 0)};
  box-shadow: inset 1px 1px 0 #fff;
  border: solid #666;
  border-width: ${(p) => (p.$right ? "0 0 0 1px" : "0 1px 0 0")};
  display: grid;
  place-items: center;
`;
const Thumb = styled.span<{ $w: number }>`
  width: ${(p) => p.$w}px;
  border: 1px solid #666699;
  border-width: 0 1px;
  background-color: #9999cc;
  padding: 2px;
  display: flex;
  box-shadow: inset 1px 1px 0 #ccccff;
  &::before {
    content: "";
    flex: 1;
    ${bumps("#ccccff", "#666699")}
  }
`;
const Splitter = styled.div`
  height: 9px;
  display: flex;
  align-items: center;
  gap: 3px;
  padding-left: 3px;
  border-bottom: 1px solid #666;
  background: #ccc;
  i {
    width: 160px;
    height: 4px;
    background:
      conic-gradient(from 270deg at 1px 1px, #fff 90deg, transparent 0) 0 0 / 4px 4px,
      conic-gradient(from 270deg at 1px 1px, #fff 90deg, transparent 0) 2px 2px / 4px 4px;
  }
`;
const TableHead = styled.div`
  height: 19px;
  flex: none;
  display: flex;
  background: #ccc;
  > span {
    flex: 1;
    background: #c0c0c0;
    border: 1px solid #666;
    border-width: 0 0 1px 1px;
    box-shadow: inset 0 1px 0 #fff;
    text-align: center;
    padding-left: 26px;
    font: 400 13px/18px ${UI};
  }
  > div {
    width: 15px;
    display: grid;
    place-items: center;
    box-shadow: inset 1px 1px 0 #fff;
    border-bottom: 1px solid #666;
  }
`;
const DockTabs = styled.div`
  display: flex;
  height: 19px;
  margin-top: 1px;
  border-top: 1px solid #666;
`;
const DockTab = styled.div<{ $on?: boolean }>`
  height: 18px;
  width: ${(p) => (p.$on ? 66 : 60)}px;
  margin-left: ${(p) => (p.$on ? 1 : 0)}px;
  padding: 0 0 1px 10px;
  display: flex;
  align-items: center;
  gap: 3px;
  background: ${(p) => (p.$on ? "#ccc" : "#999")};
  border: solid #666;
  border-width: 0 1px 1px 0;
  border-radius: 0 0 0 5px;
  box-shadow: ${(p) => (p.$on ? "-1px 0 0 #fff" : "none")};
  ${javaBold}
  letter-spacing: -0.3px;
`;
const Right = styled.div`
  margin-left: 6px;
  width: 638px;
  display: flex;
  flex-direction: column;
`;
const WorkPane = styled.div`
  height: 859px;
  flex: none;
  width: 637px;
  border: 1px solid #666;
  box-shadow: inset 1px 1px 0 #fff;
  padding: 2px 0 0 2px;
`;
const Internal = styled.div`
  width: 630px;
  height: 831px;
  border: solid #666699;
  border-width: 7px 6px 5px 7px;
  background: #ccc;
  box-shadow: 1px 1px 0 1px #fff, -1px -1px 0 #777;
  display: flex;
  flex-direction: column;
`;
const FrameTitle = styled.div`
  height: 22px;
  flex: none;
  display: flex;
  align-items: center;
  background: #ccccff;
  border-bottom: 1px solid #666699;
  padding: 0 0 1px 5px;
  font: 700 13px/18px ${UI};
  i {
    width: 475px;
    height: 17px;
    ${bumps("#e6e6ff", "#666699")}
  }
  b { width: 53px; padding-left: 5px; letter-spacing: -0.5px; }
  svg:not(:first-child) { margin-left: 5px; }
`;
const FrameBody = styled.div`
  height: 781px;
  flex: none;
  border: solid #666;
  border-width: 2px 0 0 2px;
  border-bottom: 1px solid #fff;
  border-right: 1px solid #fff;
  display: flex;
`;
const PlotSide = styled.div`
  width: 490px;
  background: #ccc;
`;
const TrackRow = styled.div`
  height: 17px;
  display: flex;
  padding-left: 58px;
`;
const PurpleKnob = styled.span<{ $w: number; $ml?: number }>`
  width: ${(p) => p.$w}px;
  height: 16px;
  margin-left: ${(p) => p.$ml || 0}px;
  background: #9999cc;
  border: 1px solid #666699;
  box-shadow: inset 1px 1px 0 #ccccff;
  display: grid;
  place-items: center;
`;
const PlotSplit = styled.div`
  width: 4px;
  background: linear-gradient(90deg, #fff 1px, #ccc 1px, #ccc 3px, #777 3px);
`;
const LegendSide = styled.div`
  width: 104px;
  display: flex;
  flex-direction: column;
  background: #000;
`;
const LegendScroll = styled(SwingScroll)`
  margin-top: auto;
`;
const TraceName = styled.div<{ $mt: number; $c: string; $sel?: boolean }>`
  display: flex;
  align-items: center;
  margin: ${(p) => p.$mt}px 0 0 4px;
  height: 14px;
  ${javaPlain}
  color: #fff;
  &::before {
    content: "";
    width: 7px;
    height: 13px;
    background: ${(p) => p.$c};
    margin-right: 5px;
  }
  span {
    line-height: 13px;
    padding: 0 ${(p) => (p.$sel ? 8 : 0)}px 0 1px;
    letter-spacing: 0.2px;
    ${(p) => p.$sel && css`background: #e4e4e4; color: #000;`}
  }
`;
const VBar = styled.div`
  width: 15px;
  display: flex;
  flex-direction: column;
  padding-top: 26px;
  background: #ccc;
`;
const VEnd = styled.span`
  height: 15px;
  display: grid;
  place-items: center;
  border: 1px solid #666;
  border-right: 0;
  box-shadow: inset 1px 1px 0 #fff;
`;
const VThumb = styled.span`
  height: 652px;
  margin-bottom: 4px;
  background: #9999cc;
  border: 1px solid #666699;
  box-shadow: inset 1px 1px 0 #ccccff;
  padding: 3px 2px;
  display: flex;
  &::before {
    content: "";
    flex: 1;
    ${bumps("#ccccff", "#666699")}
  }
`;
const WaveTabs = styled.div`
  display: flex;
  margin-top: 2px;
  gap: 3px;
  height: 21px;
`;
const WaveTab = styled.div<{ $on?: boolean }>`
  width: 314px;
  display: flex;
  align-items: center;
  justify-content: center;
  gap: 4px;
  font: ${(p) => (p.$on ? 700 : 400)} 12px/16px ${UI};
  letter-spacing: 0.1px;
  border: 2px solid;
  border-color: ${(p) => (p.$on ? "#777 #fff #fff #777" : "#fff #777 #777 #fff")};
`;
const WorkTab = styled.div`
  margin-left: 3px;
  width: 97px;
  height: 19px;
  padding-left: 11px;
  border: solid #666;
  border-width: 0 1px 1px 0;
  border-radius: 0 0 0 5px;
  box-shadow: -1px 0 0 #fff;
  font: 700 12px/20px ${UI};
  letter-spacing: 0.1px;
`;
const StatusBar = styled.div`
  display: flex;
  margin: 4px 0 0 1px;
  gap: 2px;
  height: 18px;
`;
const StatusCell = styled.div<{ $w: number }>`
  width: ${(p) => p.$w}px;
  border: 1px solid #666;
  border-right-color: #fff;
  border-bottom-color: #fff;
  box-shadow: inset 1px 1px 0 #999;
  text-align: center;
  font: 400 13px/17px ${UI};
`;

/* Toolbar glyphs, each on a 16 px grid. */
const grey = "#8c8c8c";
const Tree = ({ c, extra }: { c: string; extra: React.ReactNode }) => (
  <Px><path d="M4.500 1v11M5 2.500h3M5 6.500h3M8.500.5h5v4h-5M.5 11.500h6v4h-6z" stroke={c} /><path d="M10 2.500h1M12 2.500h1M2 13.500h1M4 13.500h1" stroke={c} />{extra}</Px>
);
const Mag = ({ inner, c = "#000", h = "#0000c8" }: { inner?: React.ReactNode; c?: string; h?: string }) => (
  <svg width="16" height="16" viewBox="0 0 16 16" fill="none"><circle cx="6.500" cy="6.500" r="5.500" stroke={c} strokeWidth="1.200" fill="#ddd" />{inner}<path d="M10.500 10.500l4.500 4.500" stroke={h} strokeWidth="2.600" /></svg>
);
const BackMag = ({ c, h, f }: { c: string; h: string; f: string }) => (
  <svg width="16" height="16" viewBox="0 0 16 16" fill="none"><circle cx="9" cy="4.500" r="4" stroke={c} fill={f} /><path d="M12 7.500l3.500 3.500" stroke={h} strokeWidth="2.500" /><path d="M1 10v5h5z" fill={c} /><path d="M3 13c2-4 6-4 6-1s-3 3-3 3" stroke={c} /></svg>
);
const groups: { i: React.ReactNode; on?: boolean }[][] = [
  [
    { i: <Px><path d="M5 1h10v6H5z" fill="#fff" stroke="#008080" /><path d="M5 1h11v3H5z" fill="#008080" /><path d="M1 6h8v4H1z" fill="#fff" stroke="#008080" /><path d="M0 5h10v2H0z" fill="#008080" /><path d="M6.500 9.500h9v5h-9z" fill="#fff" stroke="#000080" /><path d="M6 9h10v3H6z" fill="#000080" /></Px> },
    { i: <Px><path d="M.5 13V4.500h5l1 1h5V8" fill="#ffff90" stroke="#000" /><path d="M.5 13.500l3-5.500h12l-4 5.500z" fill="#8a8420" stroke="#000" /><path d="M9 2.500c2-2 4-1 5 1M14.500 1v3h-3" stroke="#000" /></Px> },
    { i: <Px><path d="M1.500 1.500h13v13h-13z" fill="#808000" stroke="#000" /><path d="M4 2h8v6H4z" fill="#ddd" /><path d="M4 10h8v4H4z" fill="#000" /><path d="M9 11h2v3H9z" fill="#ddd" /></Px> },
  ],
  [{ i: <Px><path d="M4.500 7l2-6h7l-2 6z" fill="#fff" stroke="#000" /><path d="M.5 8.500l2-2h12l-1 6h-13z" fill="#ddd" stroke="#000" /><path d="M2 11.500h10M2.500 14.500h10l3-3v-4M7 3.500h4M6 5.500h4" stroke="#000" /></Px> }],
  [
    { i: <Px><path d="M5.500 1v4l3 5M10.500 1v4l-3 5" stroke="#000" /><path d="M8 9L6.500 11M8 9l2 2" stroke="#000" /><path d="M3.500 10.500h3v4h-3zM9.500 9.500h3v4h-3z" stroke="#0000a0" /></Px> },
    { i: <Px><path d="M.5 1.500h7l2 2v7h-9z" fill="#fff" stroke="#000" /><path d="M6.500 5.500h6l3 3v6h-9z" fill="#fff" stroke="#000080" /><path d="M2 4.500h4M2 6.500h3M2 8.500h3M8 8.500h4M8 10.500h5M8 12.500h5" stroke="#000080" /></Px> },
    { i: <Px><path d="M1 2h12v12H1z" fill={grey} /><path d="M4 0h6v3H4z" fill="#777" /><path d="M7.500 6.500h5l3 3v5h-8z" fill="#bbb" stroke="#777" /><path d="M9 9.500h3M9 11.500h4" stroke="#777" /></Px> },
    { i: <RedX /> },
  ],
  [
    { i: <Px><path d="M2 5v5h5M3 9c3-5 10-5 9 2" stroke={grey} /></Px> },
    { i: <Px><path d="M14 5v5H9M13 9C10 4 3 4 4 11" stroke={grey} /></Px> },
  ],
  [
    { i: <Tree c="#004080" extra={<path d="M12 5l4 4-4 4-3-2V7z" fill="#00d800" />} /> },
    { i: <Tree c={grey} extra={<path d="M9 7l7 7M16 7l-7 7" stroke={grey} strokeWidth="2" />} /> },
    { i: <Tree c={grey} extra={<path d="M9 9l3-3v6zM12 9h4" fill={grey} stroke={grey} />} /> },
    { i: <Tree c={grey} extra={<path d="M8 9h4M12 6l3 3-3 3z" fill={grey} stroke={grey} />} /> },
    { i: <Px><path d="M1 0v16M3 1v15" stroke={grey} strokeWidth="2" strokeDasharray="1 1" /><path d="M7 8h9M7 8l4-4v8z" fill={grey} stroke={grey} strokeWidth="1.500" /></Px> },
    { i: <Px><path d="M13 0v16M15 1v15" stroke={grey} strokeWidth="2" strokeDasharray="1 1" /><path d="M0 8h10M10 8L6 4v8z" fill={grey} stroke={grey} strokeWidth="1.500" /></Px> },
  ],
  [
    { i: <Px><path d="M0 5h16v7H0z" fill="#000" /><path d="M8 0l3 4H5zM8 16l3-4H5z" fill="#000" /><path d="M1 9l3-2 4 2 3 1 4-2" stroke="#00e000" strokeWidth="1.300" /></Px> },
    { i: <Px><path d="M1.500 2.500h12v12h-12zM5.500 2v13M9.500 2v13M1 6.500h13M1 10.500h13" stroke="#000" /></Px> },
    { on: true, i: <Px w={18} h={18}><path d="M1.500 1.500h16v15h-16z" fill="#fff" stroke="#000" /><path d="M6.500 1v16" stroke="#000" strokeWidth="1.500" /><path d="M4 3v12" stroke="#f08040" strokeWidth="2" strokeDasharray="2 1" /><path d="M8 9l4-3v6zM12 9h1M14 9h1M16 9h1" fill="#000" stroke="#000" /></Px> },
  ],
  [
    { i: <Mag inner={<path d="M4.500 4.500h4v4h-4z" stroke="#000" />} /> },
    { i: <Mag inner={<path d="M6.500 3.500v6M3.500 6.500h6" stroke="#000" strokeWidth="1.700" />} /> },
    { i: <Mag inner={<path d="M3.500 6.500h6" stroke="#000" strokeWidth="1.500" />} /> },
    { i: <BackMag c="#000" h="#0000c8" f="#ddd" /> },
    { i: <BackMag c={grey} h={grey} f={grey} /> },
  ],
  [
    { i: <Px><path d="M.5 2.500h15v12H.5z" fill="#eee" stroke="#000" /><path d="M3 4.500h10v1H3z" stroke="#000" /><path d="M3 8.500h10M3 10.500h10M3 12.500h10" stroke="#000" strokeDasharray="2 1" /></Px> },
    { on: true, i: <Px><path d="M1.500 1v10h10z" fill="#00d8d8" stroke="#004060" /><path d="M1 12.500h14v3H1z" fill="#ccc" stroke="#000" /><path d="M9 7l5-6 2 1-5 7z" fill="#f0e000" stroke="#000" strokeWidth=".8" /></Px> },
  ],
  [{ i: <Px><path d="M1.500 0v16M14.500 0v16" stroke="#00c000" strokeWidth="2" /><path d="M0 1v15M16 0v15" stroke="#000" /><path d="M3 8.500h10M6 6l-3 2.500L6 11M10 6l3 2.500-3 2.500" stroke="#000" /></Px> }],
  [
    { i: <Px><path d="M.5.500h9v5h-9zM3.500 5.500h9v5h-9zM6.500 10.500h9v5h-9z" fill="#fff" stroke="#000080" /><path d="M0 1.500h10M3 6.500h10M6 11.500h10" stroke="#000080" strokeWidth="3" /></Px> },
    { i: <Px><path d="M1.500 1.500h13v13h-13z" fill="#fff" stroke="#000080" /><path d="M1 3h14M1 9h14" stroke="#000080" strokeWidth="3" /></Px> },
    { i: <Px><path d="M1.500 1.500h13v13h-13zM8 2v13" fill="#fff" stroke="#000080" /><path d="M1 3h14" stroke="#000080" strokeWidth="3" /></Px> },
    { i: <Px><path d="M1.500 1.500h13v13h-13zM8 2v13" fill="#fff" stroke="#000080" /><path d="M1 3h14M1 9h14" stroke="#000080" strokeWidth="3" /></Px> },
  ],
];

/* ---------- the plot ---------- */

const PlotSvg = styled.svg`
  background: #000;
  font: 400 10px ${UI};
  .axis { stroke: #888; fill: none; }
  .dash { stroke: #888; stroke-dasharray: 4 3; fill: none; }
  .num { fill: #fff; }
  .name { fill: #f4a460; font-size: 12.500px; letter-spacing: 1px; }
  .note { fill: #f0f0f0; font-size: 12px; letter-spacing: 0.58px; }
  .span { fill: #ffff00; font-size: 12px; letter-spacing: -0.05px; }
`;
const volts = Array.from({ length: 15 }, (_, i) => (1.3 - i * 0.1).toFixed(1).replace("-0.0", "0.0"));

const YAxis = ({ top }: { top: number }) => (
  <g>
    {volts.map((v, i) => {
      const y = Math.round(top + i * 22.55) + 0.5;
      return (
        <React.Fragment key={v}>
          <path className="axis" d={`M1101 ${y}h10`} />
          {i < 14 && <path className="axis" d={`M1107 ${Math.round(y + 11)}.5h4`} />}
          <text className="num" x="1099" y={y + (i === 14 ? -0.500 : 2.500)} textAnchor="end">{v}</text>
        </React.Fragment>
      );
    })}
    <path className="axis" d={`M1111.500 ${top}v316M1111 ${top + 0.5}h433`} />
  </g>
);
const Target = ({ x, y }: { x: number; y: number }) => (
  <g stroke="#d8d8d8" fill="none" shapeRendering="auto"><circle cx={x} cy={y} r="6.700" /><path d={`M${x - 7} ${y}h14M${x} ${y - 7}v14`} /></g>
);
const Plot = () => (
  <PlotSvg width="490" height="761" viewBox="1054 148 490 761" shapeRendering="crispEdges">
    <YAxis top={197} />
    <YAxis top={542} />
    <path className="axis" d="M1111 513.500h433" />
    <path className="axis" d="M1111 859h433" strokeWidth="2" />
    {Array.from({ length: 22 }, (_, i) => {
      const x = 1112.5 + i * 20;
      return <path key={i} className="axis" d={`M${x} 514v${i % 2 ? 2 : 4}M${x} 860v${i % 2 ? 4 : 10}`} />;
    })}
    {["9.9N", "10.0N", "10.1N", "10.2N", "10.3N", "10.4N", "10.5N", "10.6N", "10.7N", "10.8N", "10.9N"].map((t, i) => (
      <text key={t} className="num" x={1112 + i * 40} y="879" textAnchor="middle">{t}</text>
    ))}
    <text className="name" x="1328" y="891" textAnchor="middle">Time (s)</text>
    <text className="name" transform="translate(1069 355) rotate(-90)" textAnchor="middle">Voltage (V)</text>
    <text className="name" transform="translate(1069 700) rotate(-90)" textAnchor="middle">Voltage (V)</text>

    <path d="M1112 220.500h80.500L1232.500 490.500H1544" stroke="#00ff00" fill="none" />
    <path className="dash" d="M1212.500 362v177M1225.500 518v176M1237.500 598v112M1214.500 690v112M1112.500 542v316M1540.500 542v316" />
    <path d="M1112 835.500h78l5 1h11L1214 808l4-10 2-20 5-77 3-45 5-50 4-14 3-10 9-16 9-.5 2-.5h22l2 .5h44l2-.5h92l3 .5h119" stroke="#fff" fill="none" />
    <path className="axis" d="M1198 528.500h8M1214 700.500h24M1112 837.500h149M1391 837.500h148" />
    <path d="M1205 525l8 3.500-8 3.500zM1232 525l-7 3.500 7 3.500zM1214 700.500l6-3.500v7zM1238 700.500l-6-3.500v7zM1112 837.500l7-3.500v7zM1540 837.500l-7-3.500v7z" fill="#888" />
    <Target x={1212.500} y={355.500} />
    <Target x={1237.500} y={592.500} />
    <Target x={1225.500} y={701.500} />
    <Target x={1214.500} y={808.500} />
    <text className="note" x="1234" y="533">Delay : 33.681 Ps</text>
    <text className="note" x="1251" y="705">Risetime : 56.344 Ps</text>
    <text className="span" x="1263" y="842">Measurement Window</text>
  </PlotSvg>
);

const Left = () => <Px w={5} h={9}><path d="M5 0v9L0 4.500z" fill="#000" /></Px>;
const RightTri = () => <Px w={5} h={9}><path d="M0 0v9l5-4.500z" fill="#000" /></Px>;
const HBar = ({ thumb }: { thumb: number }) => (
  <SwingScroll>
    <ScrollEnd><Left /></ScrollEnd>
    <Thumb $w={thumb} />
    <ScrollEnd $right><RightTri /></ScrollEnd>
  </SwingScroll>
);

const U = ({ k, t, w }: { k: number; t: string; w: number }) => {
  const n = t === "Format" ? 2 : 1;
  return <MenuWord $w={w}>{t.slice(0, k)}<u>{t.slice(k, k + n)}</u>{t.slice(k + n)}</MenuWord>;
};

const EZwaveWindow = () => (
  <EZ>
    <Titlebar><WindowTitle $ls={-0.16}>EZwave 12.2d Production</WindowTitle><WinControls right={14} /></Titlebar>
    <EZMenu>
      <U k={0} t="File" w={32} /><U k={0} t="Edit" w={35} /><U k={0} t="View" w={39} /><U k={3} t="Format" w={53} />
      <U k={0} t="Tools" w={43} /><U k={0} t="Cursor" w={51} /><U k={0} t="Window" w={60} /><U k={0} t="Help" w={27} />
    </EZMenu>
    <EZToolbar>
      {groups.map((g, gi) => (
        <React.Fragment key={gi}>
          {gi > 0 && <ToolSep />}
          {g.map((t, ti) => <Tool key={ti} $on={t.on}>{t.i}</Tool>)}
        </React.Fragment>
      ))}
    </EZToolbar>
    <EZBody>
      <Dock>
        <DockTitle>Waveform List</DockTitle>
        <DockFrame>
          <DockTools $h={33}><BinocularIcon /><ExpandIcon /><CollapseIcon /></DockTools>
          <FilterRow><label>Contains</label><div /><EraserIcon /></FilterRow>
          <ListBox $h={366}>
            <TreeArea>
              <TreeLine $h={15} $pl={2} $ls={0.13}>Currently Open Databases</TreeLine>
              <TreeLine $h={18} $pl={3}><Knob /><FolderIcon open /><RootName>layout_test</RootName><small>( /home/b</small></TreeLine>
              <TreeLine $h={21} $pl={27}><Twig /><FolderIcon /><b>DC</b></TreeLine>
              <TreeLine $h={20} $pl={27}><Twig $last /><FolderIcon /><Picked>TRAN</Picked></TreeLine>
            </TreeArea>
            <HBar thumb={44} />
          </ListBox>
          <Splitter>
            <Px w={9} h={5}><path d="M4.500 0L9 5H0z" fill="#666699" /></Px>
            <Px w={9} h={5}><path d="M0 0h9L4.500 5z" fill="#666699" /></Px>
            <i />
          </Splitter>
          <DockTools $h={32}><BinocularIcon /><ExpandIcon c="#888" /><CollapseIcon /></DockTools>
          <FilterRow><label>Contains</label><div /><EraserIcon /></FilterRow>
          <ListBox $h={367} $mt={1}>
            <TableHead>
              <div><Px w={13} h={8}><path d="M0 0h13L6.500 8z" fill="#808070" stroke="#444" /></Px></div>
              <span>Name</span>
            </TableHead>
            <TreeArea>
              <TreeLine $h={16} $pl={2}>TRAN</TreeLine>
              <TreeLine $h={16} $pl={7}><Twig /><SineIcon /><LeafName>V(VIN)</LeafName></TreeLine>
              <TreeLine $h={16} $pl={7}><Twig $last /><SineIcon /><LeafName>V(VOUT)</LeafName></TreeLine>
            </TreeArea>
            <HBar thumb={56} />
          </ListBox>
        </DockFrame>
        <DockTabs>
          <DockTab $on><Px><path d="M.5.500h15v15H.5z" fill="#fff" stroke="#000" /><path d="M3.500 5v8h4M4 8.500h4M10 8.500v4h3" stroke="#000" /><path d="M2.500 2.500h2v2h-2zM7.500 6.500h2v2h-2zM6.500 12.500h2v2h-2zM11.500 9.500h2v2h-2z" stroke="#00f" /></Px>Tree</DockTab>
          <DockTab><Px><path d="M.5.500h15v15H.5z" fill="#fff" stroke="#000" /><path d="M3.500 6v6.500M4 6.500h9M4 8.500h9M4 10.500h9M4 12.500h9" stroke="#000" /><path d="M2.500 2.500h2v2h-2z" stroke="#00f" /></Px>List</DockTab>
        </DockTabs>
      </Dock>
      <Right>
        <WorkPane>
          <Internal>
            <FrameTitle>
              <SineIcon box /><b>Wave:2</b><i />
              <Px w={13} h={14}><path d="M1 7.500h5v5H1zM12 1L7.500 5.500M7.500 2v4h4" stroke="#000" strokeWidth="1.500" /></Px>
              <Px w={13} h={14}><path d="M7 3.500H1v9h9V8M13 0L7.500 5.500M7.500 2v4h4" stroke="#000" strokeWidth="1.500" /></Px>
              <Px w={22} h={14}><path d="M8.500.5h12v13h-12z" stroke="#223" strokeWidth="1.500" /><path d="M11 3.500l7 7M18 3.500l-7 7" stroke="#446" strokeWidth="2" /></Px>
            </FrameTitle>
            <FrameBody>
              <PlotSide>
                <Plot />
                <TrackRow>
                  <PurpleKnob $w={16}><Px w={4} h={8}><path d="M4 0v8L0 4z" fill="#555" /></Px></PurpleKnob>
                  <PurpleKnob $w={21} $ml={198} />
                  <PurpleKnob $w={16} $ml={181}><Px w={4} h={8}><path d="M0 0v8l4-4z" fill="#555" /></Px></PurpleKnob>
                </TrackRow>
              </PlotSide>
              <PlotSplit />
              <LegendSide>
                <TraceName $mt={43} $c="#00ff00"><span>V(VIN)</span></TraceName>
                <TraceName $mt={331} $c="#ffff00" $sel><span>V(VOUT)</span></TraceName>
                <LegendScroll><ScrollEnd><Left /></ScrollEnd><ScrollEnd $right><RightTri /></ScrollEnd></LegendScroll>
              </LegendSide>
              <VBar>
                <VEnd><Px w={9} h={5}><path d="M4.500 0L9 5H0z" fill="#000" /></Px></VEnd>
                <VThumb />
                <VEnd><Px w={9} h={5}><path d="M0 0h9L4.500 5z" fill="#000" /></Px></VEnd>
              </VBar>
            </FrameBody>
          </Internal>
          <WaveTabs><WaveTab>Wave:1</WaveTab><WaveTab $on><SineIcon box />Wave:2</WaveTab></WaveTabs>
        </WorkPane>
        <WorkTab>Workspace1</WorkTab>
        <StatusBar><StatusCell $w={375} /><StatusCell $w={193} /><StatusCell $w={63}>2:52 PM</StatusCell></StatusBar>
      </Right>
    </EZBody>
  </EZ>
);

/* ---------- taskbar ---------- */

const Taskbar = styled.footer`
  height: 34px;
  flex: none;
  display: flex;
  align-items: center;
  gap: 5px;
  padding-left: 2px;
  background: #e0e0df;
  border-top: 1px solid #6a6a6a;
`;
const Task = styled.div<{ $ls?: number }>`
  width: 228px;
  height: 31px;
  display: flex;
  align-items: center;
  padding: 0 8px 0 2px;
  background: linear-gradient(#f0f0ef, #ebebea);
  border-right: 1px solid #8a8a8a;
  border-bottom: 1px solid #8a8a8a;
  border-radius: 2px;
  font-size: 14px;
  letter-spacing: ${(p) => p.$ls ?? -0.65}px;
  color: #3a3f41;
  overflow: hidden;
`;
const TaskIcon = styled.span`
  width: 29px;
  display: grid;
  place-items: center;
  flex: none;
`;
const Pager = styled.div`
  width: 47px;
  height: 28px;
  margin-left: -2px;
  border: 1px solid #cfcfcf;
  background: #e4e4e3;
  text-align: center;
  font-size: 14px;
  line-height: 26px;
  color: #3a3f41;
`;
const RedHatIcon = () => (
  <svg width="15" height="15" viewBox="0 0 15 15">
    <circle cx="7.500" cy="7.500" r="7.300" fill="#111" /><path d="M1 10.500c2-1.500 5-1 8 0l1.500 3.800c-4 1.500-8.500 0-9.500-3.800z" fill="#fff" />
    <path d="M1.500 8.500C2 7 3 7 3.500 6.500c0-2 1-5 3-4.500 1 .3 1.500 0 3 .5 2 .6 2.500 3 2.500 5 1.500.8 1.500 2 0 2.800-3 1.200-9-.3-10.500-1.800z" fill="#c11" />
  </svg>
);
const TermIcon = () => (
  <svg width="22" height="20" viewBox="0 0 22 20"><rect x=".5" y=".5" width="21" height="19" fill="#cfcfca" stroke="#777" /><rect x="2" y="2" width="18" height="16" fill="#2c3532" /><path d="M4 4.500l2.500 1.500L4 7.500M7.500 9.500h3" stroke="#fff" fill="none" /></svg>
);
const PurpleApp = ({ nav }: { nav?: boolean }) => (
  <svg width="24" height="24" viewBox="0 0 24 24"><rect width="24" height="24" rx="2.500" fill="#7d2a86" /><rect width="24" height="11" rx="2.500" fill="#8273a8" opacity=".6" />
    {nav ? <path d="M1 10h5v-2h5v3M1 15h6v5h6v-5h10M18 10h5M13 20h10M15 5L9 20M8 15l8-5" stroke="#fff" strokeWidth="2" fill="none" />
      : <path d="M12 2v20M4 12h5M15 12h5M10 6H7v4M14 6h3v4M10 18H7v-4M14 18h3v-4M5 9v6h4V9zM15 9v6h4V9z" stroke="#fff" strokeWidth="1.700" fill="none" />}
  </svg>
);
const FirefoxIcon = () => (
  <svg width="22" height="22" viewBox="0 0 22 22">
    <defs><linearGradient id="fx" x1="1" y1="0" x2="0" y2="1"><stop offset="0" stopColor="#fff44f" /><stop offset=".45" stopColor="#ff980e" /><stop offset="1" stopColor="#e2115b" /></linearGradient></defs>
    <path d="M2 4c1 1 2 1 3 1 3-3 8-4 9-3 0 0 1-1 1-2 4 2 7 6 7 11a11 11 0 0 1-22 0C0 8 1 6 2 4z" fill="url(#fx)" />
    <path d="M6 6c3-2 7-1 9 1 2 3 1 7-2 8-3 1-6-1-6-3 2 1 4 1 5-1-2-1-4 0-5-1s-2-3-1-4z" fill="#0b4fb3" />
  </svg>
);
const PaperIcon = () => (
  <svg width="15" height="19" viewBox="0 0 16 20"><path d="M1 2C5 0 10 1 15 0v11c-2 3-6 3-9 3l-5 5z" fill="#7dc242" /><path d="M1 12h5l-5 7z" fill="#0f9d58" /><path d="M1 3l4 2v7l-4 2z" fill="#1aa87c" /><path d="M6 5h5v5H6z" fill="#e8f5d8" /></svg>
);
const tasks: [React.ReactNode, string, number?][] = [
  [<PaperIcon />, "Balance for bxl1703", -0.7],
  [<TermIcon />, "bxl1703@eng-2500-29:~/Pyxi...", -0.5],
  [<PurpleApp nav />, "Project Navigator - /home/bxl..."],
  [<TermIcon />, "bxl1703@eng-2500-29:~/Pyxi...", -0.5],
  [<PurpleApp />, "IC 0: inv2 > inv2 (i)(GE-R)  - Py...", -0.4],
  [<FirefoxIcon />, "lab4res - Google Sheets - Mo...", -0.62],
  [<SineIcon box size={24} />, "EZwave 12.2d Production"],
];
const TaskText = styled.span`
  margin-left: 2px;
  white-space: pre;
`;

export default function App() {
  return (
    <>
      <Global />
      <Desktop>
        <TopBar>
          <RedHatIcon />
          <TopItem $w={99}>Applications</TopItem>
          <TopItem $w={65}>Places</TopItem>
          <TopItem $w={130}>Measurement Tool</TopItem>
          <TopRight>
            <Clock>Sat 14:52</Clock>
            <Dot />
            <TrayIcon $mr={10}><Px w={17}><path d="M6 1h5v5H6zM1 11h5v4H1zM11 11h5v4h-5z" fill="#2e3436" /><path d="M8.500 6v3M3.500 11V8.500h10V11" stroke="#2e3436" /></Px></TrayIcon>
            <TrayIcon $mr={10}><MdVolumeUp size={20} /></TrayIcon>
            <TrayIcon><MdPowerSettingsNew size={18} /></TrayIcon>
          </TopRight>
        </TopBar>
        <Workarea>
          <FirefoxWindow />
          <EZwaveWindow />
        </Workarea>
        <Taskbar>
          {tasks.map(([icon, label, ls], i) => (
            <Task key={i} $ls={ls}><TaskIcon>{icon}</TaskIcon><TaskText>{label}</TaskText></Task>
          ))}
          <Pager>1 / 4</Pager>
        </Taskbar>
        <MeasurementTool />
      </Desktop>
    </>
  );
}
